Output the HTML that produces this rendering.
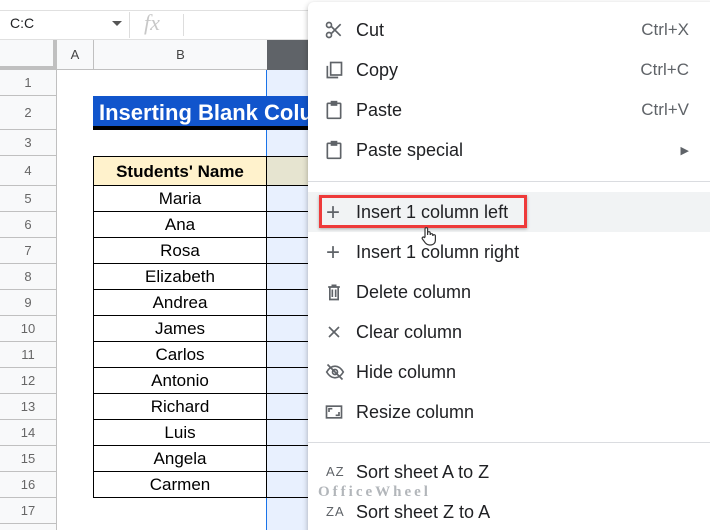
<!DOCTYPE html>
<html><head><style>
*{margin:0;padding:0;box-sizing:border-box}
html,body{width:710px;height:530px;overflow:hidden}
body{background:#fff;font-family:"Liberation Sans",Arial,sans-serif;position:relative}
.abs{position:absolute}
.rh{position:absolute;left:0;width:57px;background:#f8f9fa;border-bottom:1px solid #c0c0c0;border-right:1px solid #c0c0c0;color:#666;font-size:13px;text-align:center}
.cell{position:absolute;left:93px;width:174px;border:1px solid #000;border-top:none;text-align:center;font-size:17px;color:#000}
.mi{position:absolute;left:308px;width:402px;height:40px;font-size:18px;color:#202124}
.mi .t{position:absolute;left:48px;top:10px}
.mi .k{position:absolute;right:21px;top:10px;color:#5f6368;font-size:17px}
.mi svg{position:absolute;left:16px;top:10px}
</style></head><body>
<div class="abs" style="left:0;top:10px;width:310px;height:30px;border-top:1px solid #e0e0e0;border-bottom:1px solid #e0e0e0"></div>
<div class="abs" style="left:10px;top:15px;font-size:14px;color:#202124">C:C</div>
<div class="abs" style="left:112px;top:21px;width:0;height:0;border-left:5px solid transparent;border-right:5px solid transparent;border-top:5px solid #555"></div>
<div class="abs" style="left:129px;top:12px;width:1px;height:26px;background:#ddd"></div>
<div class="abs" style="left:144px;top:10px;font-family:'Liberation Serif',serif;font-style:italic;font-size:22px;color:#c8c8c8">fx</div>
<div class="abs" style="left:183px;top:14px;width:1px;height:22px;background:#ddd"></div>
<div class="abs" style="left:0;top:40px;width:57px;height:30px;background:#f8f9fa;border-right:4px solid #c0c0c0;border-bottom:4px solid #c0c0c0"></div>
<div class="abs" style="left:57px;top:40px;width:37px;height:30px;background:#f8f9fa;border-right:1px solid #c0c0c0;border-bottom:1px solid #c0c0c0;font-size:13px;color:#444;text-align:center;line-height:30px">A</div>
<div class="abs" style="left:94px;top:40px;width:173px;height:30px;background:#f8f9fa;border-bottom:1px solid #c0c0c0;font-size:13px;color:#444;text-align:center;line-height:30px">B</div>
<div class="abs" style="left:267px;top:40px;width:45px;height:30px;background:#5f6368"></div>
<div class="rh" style="top:70px;height:26px;line-height:26px">1</div>
<div class="rh" style="top:96px;height:34px;line-height:34px">2</div>
<div class="rh" style="top:130px;height:26px;line-height:26px">3</div>
<div class="rh" style="top:156px;height:30px;line-height:30px">4</div>
<div class="rh" style="top:186px;height:26px;line-height:26px">5</div>
<div class="rh" style="top:212px;height:26px;line-height:26px">6</div>
<div class="rh" style="top:238px;height:26px;line-height:26px">7</div>
<div class="rh" style="top:264px;height:26px;line-height:26px">8</div>
<div class="rh" style="top:290px;height:26px;line-height:26px">9</div>
<div class="rh" style="top:316px;height:26px;line-height:26px">10</div>
<div class="rh" style="top:342px;height:26px;line-height:26px">11</div>
<div class="rh" style="top:368px;height:26px;line-height:26px">12</div>
<div class="rh" style="top:394px;height:26px;line-height:26px">13</div>
<div class="rh" style="top:420px;height:26px;line-height:26px">14</div>
<div class="rh" style="top:446px;height:26px;line-height:26px">15</div>
<div class="rh" style="top:472px;height:26px;line-height:26px">16</div>
<div class="rh" style="top:498px;height:26px;line-height:26px">17</div>
<div class="rh" style="top:524px;height:10px"></div>
<div class="abs" style="left:266px;top:70px;width:45px;height:460px;background:#e8f0fe;border-left:1px solid #1a73e8"></div>
<div class="abs" style="left:93px;top:96px;width:218px;height:34px;background:#1155cc;color:#fff;font-weight:bold;font-size:22px;line-height:33px;padding-left:6px;white-space:nowrap;overflow:hidden;border-bottom:4px solid #000">Inserting Blank Columns</div>
<div class="cell" style="top:156px;height:30px;border-top:1px solid #000;background:#fff2cc;font-weight:bold;line-height:29px">Students' Name</div>
<div class="abs" style="left:267px;top:156px;width:44px;height:30px;background:#e6e4d0;border-top:1px solid #000;border-bottom:1px solid #000"></div>
<div class="cell" style="top:186px;height:26px;line-height:26px">Maria</div>
<div class="cell" style="top:212px;height:26px;line-height:26px">Ana</div>
<div class="cell" style="top:238px;height:26px;line-height:26px">Rosa</div>
<div class="cell" style="top:264px;height:26px;line-height:26px">Elizabeth</div>
<div class="cell" style="top:290px;height:26px;line-height:26px">Andrea</div>
<div class="cell" style="top:316px;height:26px;line-height:26px">James</div>
<div class="cell" style="top:342px;height:26px;line-height:26px">Carlos</div>
<div class="cell" style="top:368px;height:26px;line-height:26px">Antonio</div>
<div class="cell" style="top:394px;height:26px;line-height:26px">Richard</div>
<div class="cell" style="top:420px;height:26px;line-height:26px">Luis</div>
<div class="cell" style="top:446px;height:26px;line-height:26px">Angela</div>
<div class="cell" style="top:472px;height:26px;line-height:26px">Carmen</div>
<div class="abs" style="left:267px;top:211px;width:44px;height:1px;background:#000"></div>
<div class="abs" style="left:267px;top:237px;width:44px;height:1px;background:#000"></div>
<div class="abs" style="left:267px;top:263px;width:44px;height:1px;background:#000"></div>
<div class="abs" style="left:267px;top:289px;width:44px;height:1px;background:#000"></div>
<div class="abs" style="left:267px;top:315px;width:44px;height:1px;background:#000"></div>
<div class="abs" style="left:267px;top:341px;width:44px;height:1px;background:#000"></div>
<div class="abs" style="left:267px;top:367px;width:44px;height:1px;background:#000"></div>
<div class="abs" style="left:267px;top:393px;width:44px;height:1px;background:#000"></div>
<div class="abs" style="left:267px;top:419px;width:44px;height:1px;background:#000"></div>
<div class="abs" style="left:267px;top:445px;width:44px;height:1px;background:#000"></div>
<div class="abs" style="left:267px;top:471px;width:44px;height:1px;background:#000"></div>
<div class="abs" style="left:267px;top:497px;width:44px;height:1px;background:#000"></div>
<div class="abs" style="left:308px;top:2px;width:410px;height:540px;background:#fff;border-radius:6px;box-shadow:0 2px 6px rgba(0,0,0,.3)"></div>
<div class="mi" style="top:10px"><svg width="20" height="20" viewBox="0 0 24 24" fill="none" stroke="#5f6368" stroke-width="2"><circle cx="6" cy="6" r="3"/><circle cx="6" cy="18" r="3"/><path d="M8.5 7.5L20 19M8.5 16.5L20 5"/></svg><span class="t">Cut</span><span class="k">Ctrl+X</span></div>
<div class="mi" style="top:50px"><svg width="20" height="20" viewBox="0 0 24 24" fill="none" stroke="#5f6368" stroke-width="2"><rect x="8" y="3" width="13" height="15"/><path d="M4 7v14h13"/></svg><span class="t">Copy</span><span class="k">Ctrl+C</span></div>
<div class="mi" style="top:90px"><svg width="20" height="20" viewBox="0 0 24 24" fill="none" stroke="#5f6368" stroke-width="2"><rect x="4" y="4" width="16" height="18" rx="1"/><rect x="9" y="2" width="6" height="4" fill="#5f6368"/></svg><span class="t">Paste</span><span class="k">Ctrl+V</span></div>
<div class="mi" style="top:130px"><svg width="20" height="20" viewBox="0 0 24 24" fill="none" stroke="#5f6368" stroke-width="2"><rect x="4" y="4" width="16" height="18" rx="1"/><rect x="9" y="2" width="6" height="4" fill="#5f6368"/></svg><span class="t">Paste special</span><span class="k" style="font-size:11px;top:14px">&#9654;</span></div>
<div class="abs" style="left:308px;top:181px;width:402px;height:1px;background:#dadce0"></div>
<div class="mi" style="top:192px;background:#f1f3f4"><span class="t" style="left:18px;top:7px;font-size:24px;color:#5f6368">+</span><span class="t">Insert 1 column left</span></div>
<div class="abs" style="left:319px;top:195px;width:208px;height:33px;border:3px solid #ee3a3a;box-shadow:0 1px 3px rgba(0,0,0,.3)"></div>
<svg class="abs" style="left:420px;top:226px" width="18" height="20" viewBox="0 0 18 20" fill="#fff" stroke="#333" stroke-width="1.2"><path d="M5 11V3a1.3 1.3 0 0 1 2.6 0v6V7a1.3 1.3 0 0 1 2.6 0v2a1.3 1.3 0 0 1 2.6 0v1a1.3 1.3 0 0 1 2.6 0v4c0 3-2 5-5 5h-1c-2 0-3-1-4-2l-3-4a1.2 1.2 0 0 1 2-1.5z"/></svg>
<div class="mi" style="top:232px"><span class="t" style="left:18px;top:7px;font-size:24px;color:#5f6368">+</span><span class="t">Insert 1 column right</span></div>
<div class="mi" style="top:272px"><svg width="20" height="20" viewBox="0 0 24 24" fill="none" stroke="#5f6368" stroke-width="2"><path d="M5 6h14M9 4h6M7 6v15h10V6M10 9v9M14 9v9"/></svg><span class="t">Delete column</span></div>
<div class="mi" style="top:312px"><svg width="20" height="20" viewBox="0 0 24 24" fill="none" stroke="#5f6368" stroke-width="2"><path d="M6 6l12 12M18 6L6 18"/></svg><span class="t">Clear column</span></div>
<div class="mi" style="top:352px"><svg width="22" height="20" viewBox="0 0 24 24" fill="none" stroke="#5f6368" stroke-width="2"><path d="M2 12c3-5 7-7 10-7s7 2 10 7c-3 5-7 7-10 7s-7-2-10-7z"/><circle cx="12" cy="12" r="3"/><path d="M3 3l18 18"/></svg><span class="t">Hide column</span></div>
<div class="mi" style="top:392px"><svg width="20" height="20" viewBox="0 0 24 24" fill="none" stroke="#5f6368" stroke-width="2"><rect x="3" y="5" width="18" height="14"/><path d="M6 12V8h4M18 12v4h-4"/></svg><span class="t">Resize column</span></div>
<div class="abs" style="left:308px;top:442px;width:402px;height:1px;background:#dadce0"></div>
<div class="mi" style="top:452px"><span class="t" style="left:18px;top:12px;font-size:13px;color:#5f6368;letter-spacing:1px">AZ</span><span class="t">Sort sheet A to Z</span></div>
<div class="abs" style="left:318px;top:484px;font-family:'Liberation Serif',serif;font-weight:bold;font-size:15px;color:#a0a4aa;letter-spacing:3px;opacity:.8">OfficeWheel</div>
<div class="mi" style="top:492px"><span class="t" style="left:18px;top:12px;font-size:13px;color:#5f6368;letter-spacing:1px">ZA</span><span class="t">Sort sheet Z to A</span></div>
</body></html>
